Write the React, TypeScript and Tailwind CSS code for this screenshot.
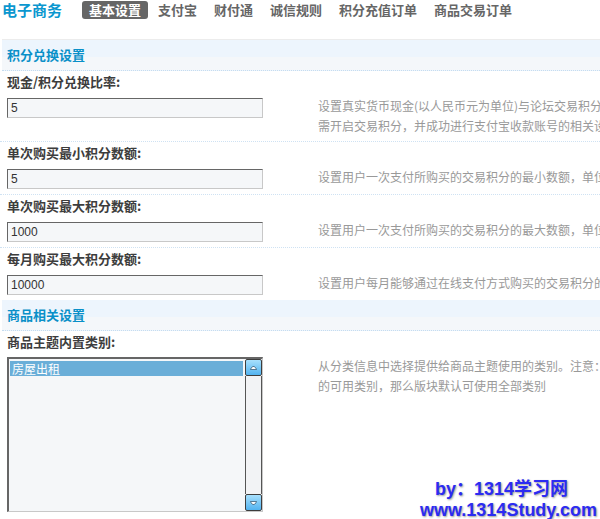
const tabs = ['基本设置', '支付宝', '财付通', '诚信规则', '积分充值订单', '商品交易订单'];

const rows = [
  {
    label: '现金/积分兑换比率:',
    value: '5',
    desc: [
      '设置真实货币现金(以人民币元为单位)与论坛交易积分的兑换比率，使用此功能',
      '需开启交易积分，并成功进行支付宝收款账号的相关设置',
    ],
  },
  {
    label: '单次购买最小积分数额:',
    value: '5',
    desc: ['设置用户一次支付所购买的交易积分的最小数额，单位：积分'],
  },
  {
    label: '单次购买最大积分数额:',
    value: '1000',
    desc: ['设置用户一次支付所购买的交易积分的最大数额，单位：积分'],
  },
  {
    label: '每月购买最大积分数额:',
    value: '10000',
    desc: ['设置用户每月能够通过在线支付方式购买的交易积分的最大数额'],
  },
];

function SectionHeader({ title }: { title: string }) {
  return (
    <div className="h-[31px] ml-[2px] pl-[5px] bg-[linear-gradient(#edf5fd_0%,#edf5fd_58%,#f4f7fa_58%)] border-b border-dotted border-[#c6dcef] text-[13px] font-bold text-[#0a90c8] leading-[30px]">
      {title}
    </div>
  );
}

function Field({ label, value, desc, last }: { label: string; value: string; desc: string[]; last?: boolean }) {
  return (
    <div className={last ? '' : 'border-b border-dotted border-[#cfe2f3]'}>
      <div className="pl-[7px] pt-[1px] leading-[20px] text-[13px] font-bold text-[#3d3d3d]">{label}</div>
      <div className="flex items-start mt-[4px] pb-[5px]">
        <div className="w-[318px] shrink-0 pl-[7px] pt-[2px]">
          <input
            readOnly
            defaultValue={value}
            className="block w-[256px] h-[20px] px-[3px] bg-[#f5f7f9] border-t border-l border-[#666] border-b-[#c8c8c8] border-r-[#c8c8c8] border-b border-r text-[12px] text-[#333] font-['Liberation_Sans',sans-serif] outline-none"
          />
        </div>
        <div className="text-[12px] leading-[20px] text-[#999] whitespace-nowrap">
          {desc.map(d => (
            <div key={d}>{d}</div>
          ))}
        </div>
      </div>
    </div>
  );
}

function ScrollButton({ down }: { down?: boolean }) {
  return (
    <div className="h-[17px] w-[17px] rounded-[2px] border border-[#3d3d3d] bg-[linear-gradient(#a8e0fd,#52b3f0)] flex items-center justify-center">
      <svg width="7" height="4" viewBox="0 0 7 4" className={down ? 'rotate-180' : ''}>
        <path d="M0.5 3.5 L1.5 1.5 L3 0.5 L4 0.5 L5.5 1.5 L6.5 3.5 Z" fill="#fff" stroke="#2a4a66" strokeWidth="0.7" />
      </svg>
    </div>
  );
}

export default function App() {
  return (
    <div className="relative w-[600px] h-[519px] overflow-hidden bg-white font-['Noto_Sans_CJK_SC',sans-serif]">
      <div className="w-[900px]">
        {/* top nav */}
        <div className="flex items-start h-[40px] ml-[2px] border-b border-[#ececec]">
          <div className="mt-[1px] text-[15px] leading-[18px] font-bold text-[#0b97cf]">电子商务</div>
          <div className="flex gap-[3px] ml-[20px] mt-[1px]">
            {tabs.map((t, i) => (
              <div
                key={t}
                className={
                  i === 0
                    ? 'h-[18px] px-[7px] rounded-[3px] bg-[#666] text-white text-[13px] font-bold leading-[18px]'
                    : 'h-[18px] px-[7px] text-[#666] text-[13px] font-bold leading-[18px]'
                }
              >
                {t}
              </div>
            ))}
          </div>
        </div>

        <SectionHeader title="积分兑换设置" />
        {rows.map((r, i) => (
          <Field key={r.label} {...r} last={i === rows.length - 1} />
        ))}

        <SectionHeader title="商品相关设置" />
        <div>
          <div className="pl-[7px] pt-[1px] leading-[20px] text-[13px] font-bold text-[#3d3d3d]">商品主题内置类别:</div>
          <div className="flex items-start mt-[4px]">
            <div className="w-[318px] shrink-0 pl-[7px] pt-[1px]">
              <div className="flex w-[256px] h-[155px] bg-[#f5f7f9] border-t-2 border-l-2 border-[#666] border-b border-r border-b-[#c8c8c8] border-r-[#c8c8c8]">
                <div className="flex-1 pl-[1px] pr-[2px] pt-[2px]">
                  <div className="h-[15px] pl-[2px] bg-[#6aaed8] text-white text-[12px] leading-[15px]">房屋出租</div>
                </div>
                <div className="w-[17px] flex flex-col">
                  <ScrollButton />
                  <div className="flex-1 bg-[#f2f3f5] border-l border-r border-[#555]" />
                  <ScrollButton down />
                </div>
              </div>
            </div>
            <div className="text-[12px] leading-[20px] text-[#999] whitespace-nowrap">
              <div>从分类信息中选择提供给商品主题使用的类别。注意：如果您没有设置版块</div>
              <div>的可用类别，那么版块默认可使用全部类别</div>
            </div>
          </div>
        </div>
      </div>

      {/* watermark */}
      <div className="absolute left-[435px] top-[478px] text-[18px] leading-[22px] font-bold text-[#2b2bf2] font-['Liberation_Sans','Noto_Sans_CJK_SC',sans-serif] [text-shadow:1px_1px_2px_#9a9a9a] whitespace-nowrap">
        by：1314学习网
      </div>
      <div className="absolute left-[420px] top-[499px] text-[18px] leading-[22px] font-bold text-[#2b2bf2] font-['Liberation_Sans',sans-serif] [text-shadow:1px_1px_2px_#9a9a9a] whitespace-nowrap">
        www.1314Study.com
      </div>
    </div>
  );
}
